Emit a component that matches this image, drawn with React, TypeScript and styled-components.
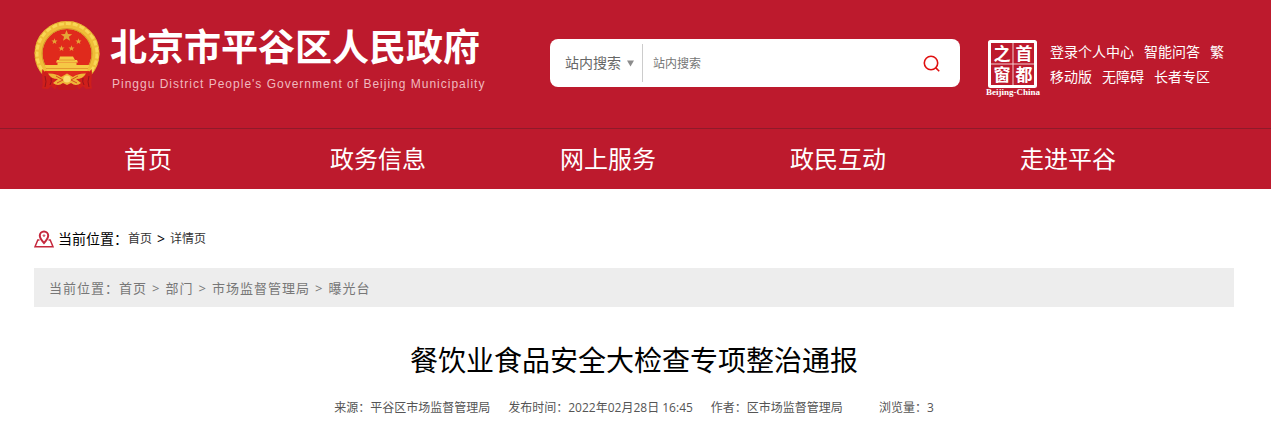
import React from 'react';
import styled, { createGlobalStyle } from 'styled-components';

const GlobalStyle = createGlobalStyle`
  * { box-sizing: border-box; }
  body {
    margin: 0;
    background: #fff;
    color: #000;
    font-family: 'Open Sans', 'Noto Sans CJK SC', sans-serif;
    font-size: 14px;
  }
  a { color: inherit; text-decoration: none; }
  h1, h2, p { margin: 0; }
`;

const Header = styled.header`
  background: #bd1a2d;
  color: #fff;
`;

const Masthead = styled.div`
  display: flex;
  align-items: flex-start;
  height: 128px;
  padding: 0 37px 0 34px;
`;

const Brand = styled.a`
  display: flex;
  gap: 10px;
  padding-top: 20px;
  flex: none;
  width: 516px;
`;

const Emblem = styled.svg`
  width: 66px;
  height: 71px;
  flex: none;
`;

const BrandName = styled.span`
  display: block;
  font-size: 37px;
  line-height: 54px;
  font-weight: 700;
  white-space: nowrap;
`;

const BrandSub = styled.span`
  display: block;
  padding-left: 2px;
  font-family: 'Liberation Sans', sans-serif;
  font-size: 12px;
  line-height: 20px;
  letter-spacing: 1px;
  color: #f0b9bf;
  white-space: nowrap;
`;

const Search = styled.form`
  display: flex;
  align-items: center;
  flex: 0 1 410px;
  min-width: 0;
  height: 48px;
  margin-top: 39px;
  border-radius: 8px;
  background: #fff;
`;

const ScopeWrap = styled.span`
  display: flex;
  align-items: center;
  flex: none;
  width: 93px;
  height: 38px;
  padding-left: 15px;
  border-right: 1px solid #ccc;
`;

const Scope = styled.select`
  appearance: none;
  width: 71px;
  padding: 0;
  border: 0;
  background: transparent;
  color: #666;
  font: inherit;
  line-height: 20px;
`;

const Arrow = styled.svg`
  flex: none;
  width: 7px;
  height: 7px;
  margin-left: -9px;
  pointer-events: none;
`;

const Query = styled.input`
  flex: 1;
  min-width: 0;
  height: 38px;
  padding: 0 10px;
  border: 0;
  background: transparent;
  font: inherit;
  font-size: 12px;
  &::placeholder { color: #757575; }
`;

const SearchButton = styled.button`
  display: flex;
  align-items: center;
  justify-content: center;
  width: 58px;
  height: 48px;
  padding: 0;
  border: 0;
  background: transparent;
  svg { width: 17px; height: 17px; }
`;

const Capital = styled.a`
  flex: none;
  margin: 39px 9px 0 25px;
  svg { display: block; width: 56px; height: 58px; }
`;

const Tools = styled.ul`
  flex: none;
  margin: 39px 0 0;
  padding: 0;
  list-style: none;
`;

const ToolRow = styled.li`
  display: flex;
  gap: 10px;
  line-height: 25px;
  white-space: nowrap;
`;

const Nav = styled.nav`
  display: flex;
  height: 61px;
  padding: 0 88px 0 33px;
  border-top: 1px solid #8f1a2a;
`;

const NavLink = styled.a`
  flex: 1;
  font-size: 24px;
  line-height: 60px;
  text-align: center;
`;

const Main = styled.main`
  padding: 40px 37px 8px 34px;
`;

const Location = styled.nav`
  display: flex;
  align-items: center;
  height: 20px;
  line-height: 20px;
  svg { width: 20px; height: 18px; margin-right: 4px; }
  a { font-size: 12px; color: #333; }
`;

const Separator = styled.span`
  padding: 0 5px;
`;

const Trail = styled.nav`
  margin-top: 19px;
  padding: 0 15px;
  background: #ededed;
  color: #777;
  font-size: 13px;
  line-height: 40px;
  height: 39px;
  letter-spacing: 1px;
`;

const Title = styled.h1`
  margin-top: 32px;
  font-size: 28px;
  font-weight: 400;
  line-height: 42px;
  text-align: center;
`;

const Meta = styled.p`
  display: flex;
  justify-content: center;
  gap: 18px;
  margin-top: 17px;
  color: #555;
  font-size: 12px;
  line-height: 20px;
`;

const Views = styled.span`
  padding-left: 18px;
`;

const star = (cx: number, cy: number, r: number) =>
  Array.from({ length: 10 }, (_, i) => {
    const a = (Math.PI / 5) * i - Math.PI / 2;
    const d = i % 2 ? r * 0.42 : r;
    return `${(cx + d * Math.cos(a)).toFixed(2)},${(cy + d * Math.sin(a)).toFixed(2)}`;
  }).join(' ');

const NationalEmblem = () => (
  <Emblem viewBox="0 0 66 71" aria-hidden="true">
    <circle cx="33" cy="33.5" r="28.5" fill="#e02a1c" stroke="#efbd38" strokeWidth="8" />
    <circle cx="33" cy="33.5" r="30" fill="none" stroke="#f9d655" strokeWidth="3" strokeDasharray="5 2" />
    <circle cx="33" cy="33.5" r="32" fill="none" stroke="#dba12b" strokeWidth="1" strokeDasharray="2 3" />
    <circle cx="33" cy="33.5" r="25" fill="none" stroke="#d6952a" strokeWidth="1" />
    <g fill="#e5a537">
      <polygon points={star(32.5, 16, 6)} />
      <polygon points={star(20.5, 21.5, 3.2)} />
      <polygon points={star(44.5, 21.5, 3.2)} />
      <polygon points={star(27.5, 28.5, 3.2)} />
      <polygon points={star(37.5, 28.5, 3.2)} />
    </g>
    <g fill="#f5c945">
      <path d="M26 36.5 H39 L41 40 H43 L44 42.5 H22 L23 40 H25Z" />
      <path d="M23.5 42.5 H42.5 V45 H55.5 L53 51 H13 L10.5 45 H23.5Z" />
    </g>
    <path d="M25 40 H41 M12 48.5 H54" stroke="#e08d2a" strokeWidth="0.8" />
    <path d="M11 51 H55 V56 H11Z" fill="#e02a1c" />
    <path d="M8.5 49 C11 53 16 54 22 53.5 L25 62 L21 69.5 L17 66 L14 69 L8 68.5 C10 62 7 56 8.5 49Z M57.5 49 C55 53 50 54 44 53.5 L41 62 L45 69.5 L49 66 L52 69 L58 68.5 C56 62 59 56 57.5 49Z" fill="#cf1f1b" />
    <path d="M22 64 L28 61 H38 L44 64 L41 70 H25Z" fill="#c31c1d" />
    <path d="M11 56 Q13 62 11 67 M17 58 Q18 62 16 65 M55 56 Q53 62 55 67 M49 58 Q48 62 50 65" stroke="#97141b" strokeWidth="1" fill="none" />
    <path d="M14 53.5 Q22 53 27 57 L33 53.5 L39 57 Q44 53 52 53.5 Q49 59 42 59 L47 63 Q42 67 37 63 L33 65 L29 63 Q24 67 19 63 L24 59 Q17 59 14 53.5Z" fill="#efb637" />
    <path d="M22 56 L29 60 L23 63 M44 56 L37 60 L43 63" stroke="#d54b20" strokeWidth="1" fill="none" />
    <circle cx="33" cy="59" r="3.6" fill="#fbdf70" />
  </Emblem>
);

const CapitalWindow = () => (
  <svg viewBox="0 0 56 58" role="img" aria-label="首都之窗">
    <rect x="4.5" y="2.5" width="46" height="45" rx="1" fill="none" stroke="#fff" strokeWidth="3" />
    <path d="M28 4 V46 M6 25 H49" stroke="#f2ccd0" strokeWidth="1" />
    <g fill="#fff" fontFamily="'Noto Sans CJK SC', sans-serif" fontWeight="700" fontSize="17" textAnchor="middle">
      <text x="17" y="21">之</text>
      <text x="39" y="21">首</text>
      <text x="17" y="42">窗</text>
      <text x="39" y="42">都</text>
    </g>
    <text x="28" y="56" fill="#fff" fontFamily="'Liberation Serif', serif" fontWeight="700" fontSize="9" textAnchor="middle">Beijing-China</text>
  </svg>
);

const PinIcon = () => (
  <svg viewBox="0 0 20 18" fill="none" stroke="#c5283d" strokeWidth="1.5" aria-hidden="true">
    <path d="M10 13 C7.5 10.5 5.8 8 5.8 5.6 A4.2 4.2 0 0 1 14.2 5.6 C14.2 8 12.5 10.5 10 13Z" strokeWidth="2" />
    <circle cx="10" cy="5.6" r="0.8" strokeWidth="1" />
    <path d="M5.5 10 H3.8 L1 16.8 H19 L16.2 10 H14.5" />
  </svg>
);

const navItems = ['首页', '政务信息', '网上服务', '政民互动', '走进平谷'];
const toolRows = [
  ['登录个人中心', '智能问答', '繁'],
  ['移动版', '无障碍', '长者专区'],
];
const trail = ['首页', '部门', '市场监督管理局', '曝光台'];

export default function App() {
  return (
    <>
      <GlobalStyle />
      <Header>
        <Masthead>
          <Brand href="#">
            <NationalEmblem />
            <span>
              <BrandName>北京市平谷区人民政府</BrandName>
              <BrandSub>Pinggu District People's Government of Beijing Municipality</BrandSub>
            </span>
          </Brand>
          <Search onSubmit={(e) => e.preventDefault()}>
            <ScopeWrap>
              <Scope aria-label="搜索范围">
                <option>站内搜索</option>
              </Scope>
              <Arrow viewBox="0 0 7 7" aria-hidden="true">
                <path d="M0 0.5 H7 L3.5 6.5Z" fill="#8c8c8c" />
              </Arrow>
            </ScopeWrap>
            <Query type="text" placeholder="站内搜索" aria-label="站内搜索" />
            <SearchButton type="submit" aria-label="搜索">
              <svg viewBox="0 0 17 17" fill="none" stroke="#e01010" strokeWidth="1.6">
                <circle cx="8" cy="8" r="6.7" />
                <path d="M12.6 12.6 L16.2 16.2" />
              </svg>
            </SearchButton>
          </Search>
          <Capital href="#"><CapitalWindow /></Capital>
          <Tools>
            {toolRows.map((row) => (
              <ToolRow key={row[0]}>
                {row.map((t) => <a key={t} href="#">{t}</a>)}
              </ToolRow>
            ))}
          </Tools>
        </Masthead>
        <Nav>
          {navItems.map((t) => <NavLink key={t} href="#">{t}</NavLink>)}
        </Nav>
      </Header>
      <Main>
        <Location>
          <PinIcon />
          <span>当前位置：</span>
          <a href="#">首页</a>
          <Separator>&gt;</Separator>
          <a href="#">详情页</a>
        </Location>
        <Trail>
          当前位置：
          {trail.map((t, i) => (
            <React.Fragment key={t}>
              {i > 0 && <Separator>&gt;</Separator>}
              <a href="#">{t}</a>
            </React.Fragment>
          ))}
        </Trail>
        <Title>餐饮业食品安全大检查专项整治通报</Title>
        <Meta>
          <span>来源：平谷区市场监督管理局</span>
          <span>发布时间：2022年02月28日 16:45</span>
          <span>作者：区市场监督管理局</span>
          <Views>浏览量：3</Views>
        </Meta>
      </Main>
    </>
  );
}
